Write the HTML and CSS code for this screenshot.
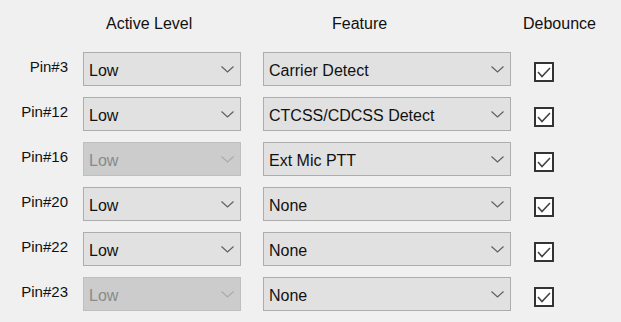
FILE: index.html
```html
<!DOCTYPE html>
<html>
<head>
<meta charset="utf-8">
<link rel="stylesheet" href="styles.css">
</head>
<body>
<div class="panel">
  <div class="hdr hdr-level">Active Level</div>
  <div class="hdr hdr-feature">Feature</div>
  <div class="hdr hdr-debounce">Debounce</div>

  <div class="pin">Pin#3</div>
  <div class="combo level"><span>Low</span><svg class="chev" viewBox="0 0 13 7"><polyline points="0.5,0.5 6.5,6 12.5,0.5"/></svg></div>
  <div class="combo feature"><span>Carrier Detect</span><svg class="chev" viewBox="0 0 13 7"><polyline points="0.5,0.5 6.5,6 12.5,0.5"/></svg></div>
  <div class="chk"><svg viewBox="0 0 20 20"><rect x="1" y="1" width="18" height="18"/><polyline points="4,10 8,14.5 16,6"/></svg></div>

  <div class="pin">Pin#12</div>
  <div class="combo level"><span>Low</span><svg class="chev" viewBox="0 0 13 7"><polyline points="0.5,0.5 6.5,6 12.5,0.5"/></svg></div>
  <div class="combo feature"><span>CTCSS/CDCSS Detect</span><svg class="chev" viewBox="0 0 13 7"><polyline points="0.5,0.5 6.5,6 12.5,0.5"/></svg></div>
  <div class="chk"><svg viewBox="0 0 20 20"><rect x="1" y="1" width="18" height="18"/><polyline points="4,10 8,14.5 16,6"/></svg></div>

  <div class="pin">Pin#16</div>
  <div class="combo level disabled"><span>Low</span><svg class="chev" viewBox="0 0 13 7"><polyline points="0.5,0.5 6.5,6 12.5,0.5"/></svg></div>
  <div class="combo feature"><span>Ext Mic PTT</span><svg class="chev" viewBox="0 0 13 7"><polyline points="0.5,0.5 6.5,6 12.5,0.5"/></svg></div>
  <div class="chk"><svg viewBox="0 0 20 20"><rect x="1" y="1" width="18" height="18"/><polyline points="4,10 8,14.5 16,6"/></svg></div>

  <div class="pin">Pin#20</div>
  <div class="combo level"><span>Low</span><svg class="chev" viewBox="0 0 13 7"><polyline points="0.5,0.5 6.5,6 12.5,0.5"/></svg></div>
  <div class="combo feature"><span>None</span><svg class="chev" viewBox="0 0 13 7"><polyline points="0.5,0.5 6.5,6 12.5,0.5"/></svg></div>
  <div class="chk"><svg viewBox="0 0 20 20"><rect x="1" y="1" width="18" height="18"/><polyline points="4,10 8,14.5 16,6"/></svg></div>

  <div class="pin">Pin#22</div>
  <div class="combo level"><span>Low</span><svg class="chev" viewBox="0 0 13 7"><polyline points="0.5,0.5 6.5,6 12.5,0.5"/></svg></div>
  <div class="combo feature"><span>None</span><svg class="chev" viewBox="0 0 13 7"><polyline points="0.5,0.5 6.5,6 12.5,0.5"/></svg></div>
  <div class="chk"><svg viewBox="0 0 20 20"><rect x="1" y="1" width="18" height="18"/><polyline points="4,10 8,14.5 16,6"/></svg></div>

  <div class="pin">Pin#23</div>
  <div class="combo level disabled"><span>Low</span><svg class="chev" viewBox="0 0 13 7"><polyline points="0.5,0.5 6.5,6 12.5,0.5"/></svg></div>
  <div class="combo feature"><span>None</span><svg class="chev" viewBox="0 0 13 7"><polyline points="0.5,0.5 6.5,6 12.5,0.5"/></svg></div>
  <div class="chk"><svg viewBox="0 0 20 20"><rect x="1" y="1" width="18" height="18"/><polyline points="4,10 8,14.5 16,6"/></svg></div>
</div>
</body>
</html>
```

FILE: styles.css
```css
html, body {
  margin: 0;
  padding: 0;
  background: #f0f0f0;
}
body {
  width: 621px;
  height: 322px;
  overflow: hidden;
  font-family: "Liberation Sans", Arial, sans-serif;
  color: #000;
}
.panel {
  display: grid;
  grid-template-columns: 83px 180px 271px 87px;
  row-gap: 11px;
  padding-top: 15px;
}
.hdr {
  font-size: 16px;
  line-height: 18px;
  height: 18px;
  margin-bottom: 8px;
  white-space: nowrap;
  color: #111;
}
.hdr-level {
  grid-column: 2;
  padding-left: 23px;
}
.hdr-feature {
  grid-column: 3;
  padding-left: 69px;
}
.hdr-debounce {
  grid-column: 4;
  margin-left: -11px;
}
.pin {
  grid-column: 1;
  font-size: 15px;
  line-height: 17px;
  padding-top: 6px;
  padding-right: 15px;
  text-align: right;
  white-space: nowrap;
  color: #111;
}
.combo {
  box-sizing: border-box;
  height: 34px;
  border: 1px solid #adadad;
  background: #e1e1e1;
  display: flex;
  align-items: center;
  justify-content: space-between;
  padding: 0 5px 0 5px;
  font-size: 16px;
  line-height: 18px;
  color: #111;
}
.combo.level {
  width: 158px;
}
.combo.feature {
  width: 248px;
}
.combo span {
  padding-top: 3px;
  white-space: nowrap;
}
.chev {
  width: 13px;
  height: 7px;
  margin-right: 1px;
  fill: none;
  stroke: #606060;
  stroke-width: 1.2;
}
.combo.disabled {
  background: #cccccc;
  border-color: #bfbfbf;
  color: #8a8a8a;
}
.combo.disabled .chev {
  stroke: #ababab;
}
.chk {
  padding-top: 10px;
}
.chk svg {
  display: block;
  width: 20px;
  height: 20px;
  fill: none;
}
.chk rect {
  fill: #fff;
  stroke: #333;
  stroke-width: 2;
}
.chk polyline {
  stroke: #444;
  stroke-width: 1.6;
  fill: none;
}
```
